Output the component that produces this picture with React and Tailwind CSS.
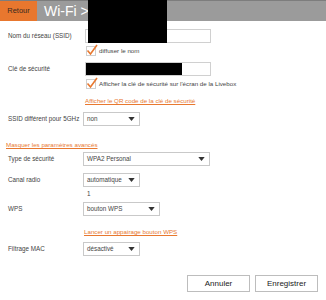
import React from 'react';

const font = { fontFamily: '"Liberation Sans", Arial, sans-serif' };

function Check() {
  return (
    <span className="relative inline-block w-[10px] h-[10px] border border-[#cfcfcf] bg-white shrink-0">
      <svg viewBox="0 0 12 12" className="absolute -left-[1px] -top-[3px] w-[12px] h-[12px]">
        <path d="M1.5 6.5 L4.5 10 L11 1" fill="none" stroke="#e8782f" strokeWidth="1.6" />
      </svg>
    </span>
  );
}

function Select({ value, width }) {
  return (
    <div className={`flex items-center justify-between h-[14px] border border-[#c9c9c9] bg-white pl-[3px] pr-[4px] ${width}`}>
      <span className="text-[6.3px] leading-none text-[#444]">{value}</span>
      <svg viewBox="0 0 8 5" className="w-[7px] h-[4px]">
        <path d="M0 0 H8 L4 5 Z" fill="#333" />
      </svg>
    </div>
  );
}

function Row({ label, children, className = '' }) {
  return (
    <div className={`flex items-center h-[14px] ${className}`}>
      <div className="w-[75px] pl-[8px] text-[6.3px] leading-none whitespace-nowrap text-[#444] shrink-0">{label}</div>
      {children}
    </div>
  );
}

function Link({ children }) {
  return <span className="text-[6.2px] leading-none text-[#e8782f] underline">{children}</span>;
}

export default function App() {
  return (
    <div className="relative w-[326px] h-[300px] bg-white overflow-hidden" style={font}>
      {/* header */}
      <div className="flex h-[21px] border-t border-[#7d7d7d] bg-[#9b9b9b]">
        <div className="w-[37px] bg-[#e8772e] flex items-center justify-center text-[7.5px] text-[#3a2a20]">Retour</div>
        <div className="pl-[7px] flex items-center text-white text-[14px] leading-none">Wi-Fi &gt;</div>
      </div>
      <div className="absolute left-[88px] top-0 w-[79px] h-[43px] bg-black" />

      <Row label="Nom du réseau (SSID)" className="mt-[8px]">
        <div className="ml-[10px] w-[126px] h-[14px] border border-[#d0d0d0] bg-white" />
      </Row>
      <div className="flex items-center h-[10px] gap-[3px] pl-[86px] mt-[3px]">
        <Check />
        <span className="text-[6.2px] leading-none text-[#444]">diffuser le nom</span>
      </div>

      <Row label="Clé de sécurité" className="mt-[6px]">
        <div className="ml-[10px] w-[126px] h-[14px] border border-[#d0d0d0] bg-white">
          <div className="w-[96px] h-full bg-black" />
        </div>
      </Row>
      <div className="flex items-center h-[10px] gap-[3px] pl-[86px] mt-[3px]">
        <Check />
        <span className="text-[6.2px] leading-none text-[#444]">Afficher la clé de sécurité sur l'écran de la Livebox</span>
      </div>
      <div className="flex items-center h-[8px] pl-[85px] mt-[8px]">
        <Link>Afficher le QR code de la clé de sécurité</Link>
      </div>

      <Row label="SSID différent pour 5GHz" className="mt-[7px]">
        <div className="ml-[8px]"><Select value="non" width="w-[57px]" /></div>
      </Row>

      <div className="flex items-center h-[8px] pl-[6px] mt-[15px]">
        <Link>Masquer les paramètres avancés</Link>
      </div>

      <Row label="Type de sécurité" className="mt-[3px]">
        <div className="ml-[8px]"><Select value="WPA2 Personal" width="w-[127px]" /></div>
      </Row>

      <Row label="Canal radio" className="mt-[7px]">
        <div className="ml-[8px]"><Select value="automatique" width="w-[57px]" /></div>
      </Row>
      <div className="flex items-center h-[8px] pl-[87px] mt-[3px] text-[6.3px] text-[#444] leading-none">1</div>

      <Row label="WPS" className="mt-[4px]">
        <div className="ml-[8px]"><Select value="bouton WPS" width="w-[77px]" /></div>
      </Row>
      <div className="flex items-center h-[8px] pl-[84px] mt-[12px]">
        <Link>Lancer un appairage bouton WPS</Link>
      </div>

      <Row label="Filtrage MAC" className="mt-[6px]">
        <div className="ml-[8px]"><Select value="désactivé" width="w-[57px]" /></div>
      </Row>

      <div className="flex justify-end gap-[5px] pr-[8px] mt-[19px]">
        <button className="w-[63px] h-[17px] border border-[#bdbdbd] bg-white text-[8px] leading-none text-[#222]">Annuler</button>
        <button className="w-[63px] h-[17px] border border-[#bdbdbd] bg-white text-[8px] leading-none text-[#222]">Enregistrer</button>
      </div>
    </div>
  );
}
